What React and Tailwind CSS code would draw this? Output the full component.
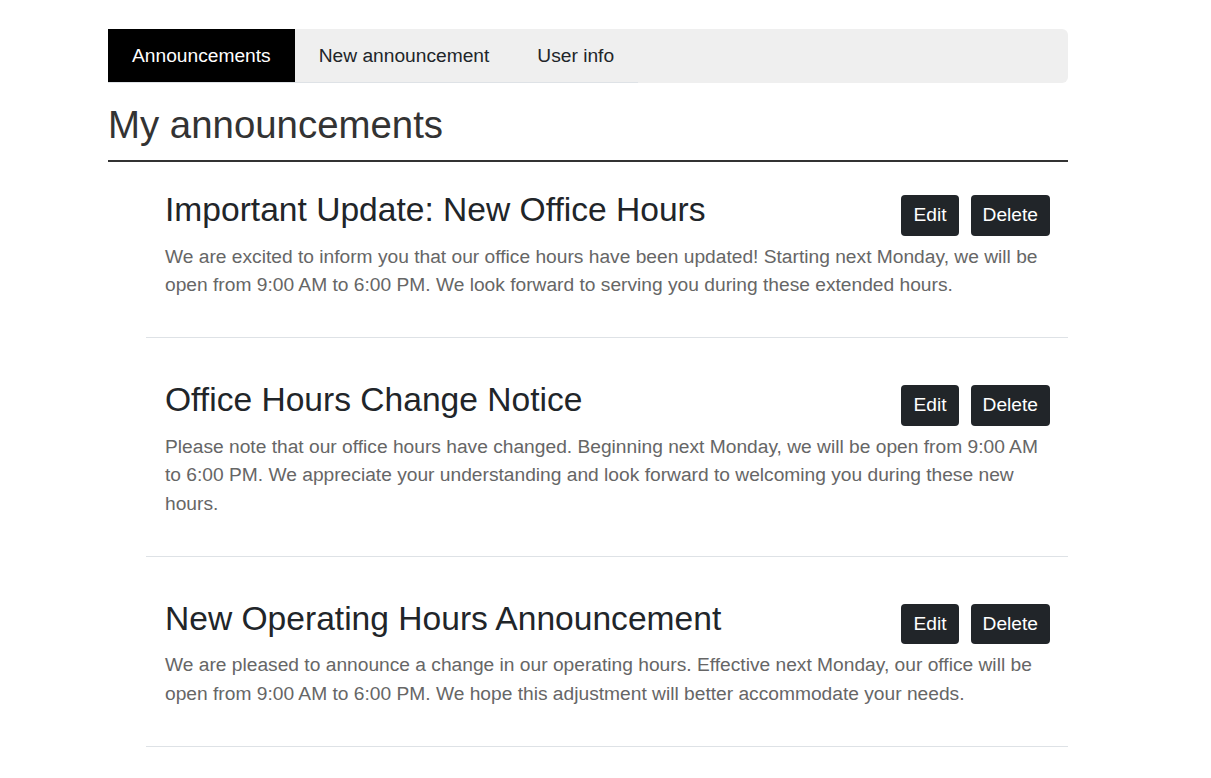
const announcements = [
  {
    id: 1,
    title: "Important Update: New Office Hours",
    body: "We are excited to inform you that our office hours have been updated! Starting next Monday, we will be open from 9:00 AM to 6:00 PM. We look forward to serving you during these extended hours.",
  },
  {
    id: 2,
    title: "Office Hours Change Notice",
    body: "Please note that our office hours have changed. Beginning next Monday, we will be open from 9:00 AM to 6:00 PM. We appreciate your understanding and look forward to welcoming you during these new hours.",
  },
  {
    id: 3,
    title: "New Operating Hours Announcement",
    body: "We are pleased to announce a change in our operating hours. Effective next Monday, our office will be open from 9:00 AM to 6:00 PM. We hope this adjustment will better accommodate your needs.",
  },
];

const tabs = ["Announcements", "New announcement", "User info"];

const App = () => {
  return (
    <div className="min-h-screen bg-white font-['Liberation_Sans',Arial,sans-serif]">
      <div className="w-[960px] ml-[108px] pt-[29px]">
        <nav className="bg-[#efefef] rounded-md">
          <ul className="inline-flex border-b border-[#dee2e6]">
            {tabs.map((tab, index) => (
              <li key={tab}>
                <button
                  className={
                    index === 0
                      ? "block px-6 py-3 text-[19.2px] leading-[29px] bg-black text-white"
                      : "block px-6 py-3 text-[19.2px] leading-[29px] text-[#212529]"
                  }
                >
                  {tab}
                </button>
              </li>
            ))}
          </ul>
        </nav>

        <h1 className="mt-[19px] pb-[12px] text-[38.4px] leading-[1.2] text-[#333] border-b-2 border-[#333]">
          My announcements
        </h1>

        <ul className="ml-[38px]">
          {announcements.map((item) => (
            <li
              key={item.id}
              className="pl-[19px] pr-[18px] pt-[42px] first:pt-[28px] pb-[37px] border-b border-[#dee2e6]"
            >
              <div className="flex items-start justify-between">
                <h2 className="text-[33.6px] leading-[1.2] text-[#212529]">{item.title}</h2>
                <div className="flex gap-3 mt-[5px] shrink-0">
                  <button className="px-3 py-[6px] text-[19.2px] leading-[28.8px] bg-[#212529] text-white rounded">
                    Edit
                  </button>
                  <button className="px-3 py-[6px] text-[19.2px] leading-[28.8px] bg-[#212529] text-white rounded">
                    Delete
                  </button>
                </div>
              </div>
              <p className="mt-[7px] text-[19.2px] leading-[28.6px] text-[#666]">{item.body}</p>
            </li>
          ))}
        </ul>
      </div>
    </div>
  );
};

export default App;
